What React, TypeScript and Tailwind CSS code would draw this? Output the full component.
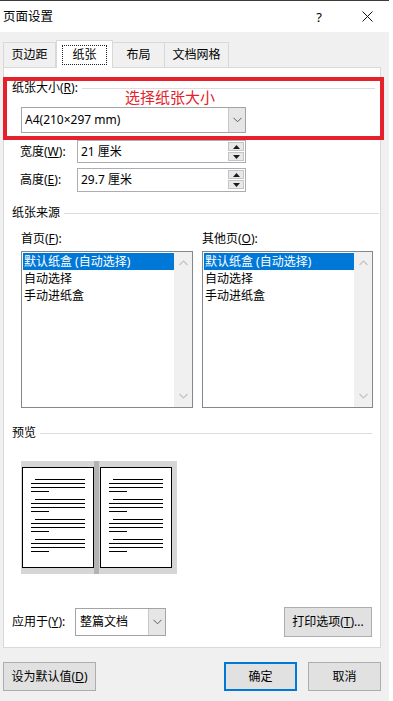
import React from "react";

const FONT = "font-['Noto_Sans','Noto_Sans_CJK_SC',sans-serif]";

function DropChevron() {
  return (
    <svg width="9" height="6" viewBox="0 0 9 6">
      <path d="M0.5 0.8 L4.5 4.8 L8.5 0.8" fill="none" stroke="#5a5a5a" strokeWidth="1" />
    </svg>
  );
}

function ScrollArrow({ up }: { up?: boolean }) {
  return (
    <svg width="9" height="6" viewBox="0 0 9 6">
      <path
        d={up ? "M0.5 5 L4.5 1 L8.5 5" : "M0.5 1 L4.5 5 L8.5 1"}
        fill="none"
        stroke="#c3c3c3"
        strokeWidth="1.2"
      />
    </svg>
  );
}

function Tri({ up }: { up?: boolean }) {
  return (
    <svg width="7" height="4" viewBox="0 0 7 4">
      <path d={up ? "M0 4 L3.5 0 L7 4 Z" : "M0 0 L3.5 4 L7 0 Z"} fill="#1a1a1a" />
    </svg>
  );
}

function SpinInput({ value }: { value: string }) {
  return (
    <div className="w-[169px] h-full border border-[#abadb3] flex items-center pl-[3px] bg-white">
      <span className="leading-[16px]">{value}</span>
      <div className="ml-auto mr-[1px] flex flex-col gap-[1px] self-start mt-[1px]">
        <div className="w-[16px] h-[9px] bg-[#e8e8e8] border border-[#c4c4c4] flex items-center justify-center">
          <Tri up />
        </div>
        <div className="w-[16px] h-[9px] bg-[#e8e8e8] border border-[#c4c4c4] flex items-center justify-center">
          <Tri />
        </div>
      </div>
    </div>
  );
}

function ListBox({ w }: { w: string }) {
  return (
    <div className={`${w} h-[157px] border border-[#828790] flex bg-white`}>
      <div className="flex-1 pt-[1px] pl-[1px]">
        <div className="h-[17px] leading-[17px] bg-[#0078d7] text-white pl-[1px]">默认纸盒 (自动选择)</div>
        <div className="h-[17px] leading-[17px] pl-[1px]">自动选择</div>
        <div className="h-[17px] leading-[17px] pl-[1px]">手动进纸盒</div>
      </div>
      <div className="w-[18px] bg-[#f0f0f0] flex flex-col items-center justify-between pt-[8px] pb-[8px]">
        <ScrollArrow up />
        <ScrollArrow />
      </div>
    </div>
  );
}

function Page({ x }: { x: number }) {
  const groups = [18, 38, 58, 78];
  return (
    <g>
      <rect x={x + 0.5} y={6.5} width={71} height={100} fill="#fff" stroke="#000" strokeWidth="1" />
      {groups.map((gy) => (
        <g key={gy} stroke="#000" strokeWidth="1">
          <line x1={x + 13} x2={x + 63} y1={gy + 0.5} y2={gy + 0.5} />
          <line x1={x + 9} x2={x + 63} y1={gy + 4.5} y2={gy + 4.5} />
          <line x1={x + 9} x2={x + 63} y1={gy + 8.5} y2={gy + 8.5} />
          <line x1={x + 9} x2={x + 27} y1={gy + 12.5} y2={gy + 12.5} />
        </g>
      ))}
    </g>
  );
}

function Preview() {
  return (
    <svg width="156" height="113" viewBox="0 0 156 113">
      <rect x="0" y="0" width="156" height="113" fill="#d6d6d6" />
      <rect x="73" y="0" width="5" height="113" fill="#b3b3b3" />
      <Page x={1} />
      <Page x={79} />
    </svg>
  );
}

export default function App() {
  return (
    <div className={`w-[393px] h-[701px] bg-white overflow-hidden ${FONT} text-[12px] text-black`}>
      <div className="relative w-[389px] h-[701px] bg-[#f0f0f0] border-t border-[#3c3c3c] flex flex-col">
        {/* Title bar */}
        <div className="h-[31px] bg-white flex items-center pl-[3px] shrink-0">
          <span className="text-[12.5px] leading-[16px]">页面设置</span>
          <span className="ml-auto text-[13px] leading-[16px]">?</span>
          <svg className="ml-[40px] mr-[16px]" width="11" height="11" viewBox="0 0 11 11">
            <path d="M0.5 0.5 L10.5 10.5 M10.5 0.5 L0.5 10.5" stroke="#111" strokeWidth="1" />
          </svg>
        </div>

        {/* Tabs */}
        <div className="h-[35px] flex items-end pl-[3px] shrink-0">
          <div className="w-[53px] h-[25px] border border-b-0 border-[#d9d9d9] flex items-center justify-center leading-[16px]">
            页边距
          </div>
          <div className="relative z-10 -mb-[1px] w-[57px] h-[28px] bg-white border border-b-0 border-[#d9d9d9] flex items-center justify-center">
            <div className="w-[45px] h-[20px] border border-dotted border-[#222] flex items-center justify-center leading-[16px]">
              纸张
            </div>
          </div>
          <div className="w-[52px] h-[25px] border border-b-0 border-l-0 border-[#d9d9d9] flex items-center justify-center leading-[16px]">
            布局
          </div>
          <div className="w-[64px] h-[25px] border border-b-0 border-l-0 border-[#d9d9d9] flex items-center justify-center leading-[16px]">
            文档网格
          </div>
        </div>

        {/* Panel */}
        <div className="ml-[3px] w-[378px] h-[581px] bg-white border border-[#d9d9d9] flex flex-col pl-[8px] shrink-0">
          <div className="mt-[12px] h-[16px] flex items-center">
            <span className="leading-[16px]">
              纸张大小(<u>R</u>):
            </span>
            <div className="flex-1 h-px bg-[#dcdcdc] ml-[4px] mr-[5px]" />
          </div>

          <div className="mt-[11px] ml-[9px] w-[225px] h-[26px] border border-[#a4a4a4] flex items-center pl-[3px]">
            <span className="leading-[16px]">A4(210×297 mm)</span>
            <div className="ml-auto w-[17px] h-full bg-[#e6e6e6] border-l border-[#c8c8c8] flex items-center justify-center">
              <DropChevron />
            </div>
          </div>

          <div className="mt-[7px] h-[23px] flex items-center">
            <span className="w-[65px] pl-[8px] leading-[16px]">
              宽度(<u>W</u>):
            </span>
            <SpinInput value="21 厘米" />
          </div>
          <div className="mt-[5px] h-[24px] flex items-center">
            <span className="w-[65px] pl-[8px] leading-[16px]">
              高度(<u>E</u>):
            </span>
            <SpinInput value="29.7 厘米" />
          </div>

          <div className="mt-[13px] h-[16px] flex items-center">
            <span className="leading-[16px]">纸张来源</span>
            <div className="flex-1 h-px bg-[#dcdcdc] ml-[4px] mr-[1px]" />
          </div>

          <div className="mt-[10px] h-[16px] flex items-center">
            <span className="ml-[9px] w-[181px] leading-[16px]">
              首页(<u>F</u>):
            </span>
            <span className="leading-[16px]">
              其他页(<u>O</u>):
            </span>
          </div>

          <div className="mt-[4px] flex">
            <div className="ml-[9px]">
              <ListBox w="w-[172px]" />
            </div>
            <div className="ml-[9px]">
              <ListBox w="w-[171px]" />
            </div>
          </div>

          <div className="mt-[17px] h-[16px] flex items-center">
            <span className="leading-[16px]">预览</span>
            <div className="flex-1 h-px bg-[#dcdcdc] ml-[4px] mr-[8px]" />
          </div>

          <div className="mt-[20px] ml-[9px]">
            <Preview />
          </div>

          <div className="mt-auto mb-[10px] h-[30px] flex items-center">
            <span className="w-[63px] leading-[16px]">
              应用于(<u>Y</u>):
            </span>
            <div className="w-[91px] h-[28px] border border-[#a4a4a4] flex items-center pl-[4px]">
              <span className="leading-[16px]">整篇文档</span>
              <div className="ml-auto w-[17px] h-full bg-[#e6e6e6] border-l border-[#c8c8c8] flex items-center justify-center">
                <DropChevron />
              </div>
            </div>
            <div className="ml-auto mr-[8px] w-[88px] h-[30px] bg-[#e1e1e1] border border-[#adadad] flex items-center justify-center leading-[16px]">
              打印选项(<u>T</u>)...
            </div>
          </div>
        </div>

        {/* Bottom buttons */}
        <div className="mt-[14px] h-[29px] flex shrink-0">
          <div className="ml-[3px] w-[93px] h-full bg-[#e1e1e1] border border-[#adadad] flex items-center justify-center leading-[16px]">
            设为默认值(<u>D</u>)
          </div>
          <div className="ml-[128px] w-[73px] h-full bg-[#e1e1e1] border-2 border-[#0078d7] flex items-center justify-center leading-[16px]">
            确定
          </div>
          <div className="ml-[11px] w-[73px] h-full bg-[#e1e1e1] border border-[#adadad] flex items-center justify-center leading-[16px]">
            取消
          </div>
        </div>

        {/* Red annotation overlay */}
        <div className="absolute left-[3px] top-[76px] w-[381px] h-[63px] border-[4px] border-[#e3222b] pointer-events-none" />
        <div className="absolute left-[125px] top-[88px] text-[15px] leading-[17px] text-[#e3222b]">选择纸张大小</div>
      </div>
    </div>
  );
}
